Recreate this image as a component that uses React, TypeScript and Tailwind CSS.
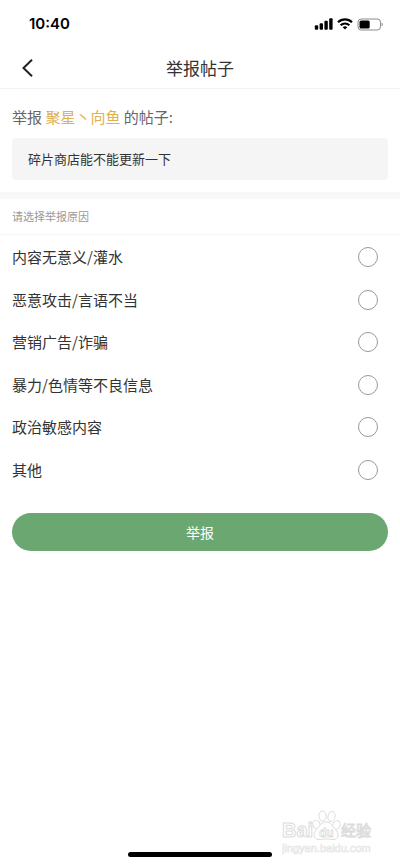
import React, { useState } from 'react';

const REASONS = [
  '内容无意义/灌水',
  '恶意攻击/言语不当',
  '营销广告/诈骗',
  '暴力/色情等不良信息',
  '政治敏感内容',
  '其他',
];

const StatusBar: React.FC = () => (
  <div className="h-12 pl-7 pr-4 flex items-center justify-between text-black">
    <span className="pl-px font-['Inter'] text-[15px] leading-5 font-semibold">10:40</span>
    <div className="flex items-center gap-1">
      {/* Signal */}
      <svg width="19" height="12" viewBox="0 0 19 12" fill="currentColor" aria-hidden="true">
        <rect x="0.8" y="7.3" width="3.4" height="4.5" rx="1" />
        <rect x="5.6" y="5.2" width="3.4" height="6.6" rx="1" />
        <rect x="10.4" y="2.8" width="3.4" height="9" rx="1" />
        <rect x="15.2" y="0.3" width="3.4" height="11.5" rx="1" />
      </svg>
      {/* Wifi */}
      <svg width="16" height="12" viewBox="0 0 16 12" fill="none" stroke="currentColor" aria-hidden="true">
        <path d="M1 4.300a10 10 0 0 1 14 0" strokeWidth="2.2" />
        <path d="M3.600 7.200a6.300 6.300 0 0 1 8.800 0" strokeWidth="2" />
        <path d="M8 11.600 5.700 9.300a3.300 3.300 0 0 1 4.600 0z" fill="currentColor" stroke="none" />
      </svg>
      {/* Battery */}
      <svg width="27" height="13" viewBox="0 0 27 13" aria-hidden="true">
        <rect x="1" y="1" width="22.5" height="11" rx="3.2" fill="none" stroke="#8a8a8a" />
        <rect x="2.5" y="2.5" width="10.2" height="8" rx="1.6" fill="currentColor" />
        <path d="M24.6 4.600c1.600.6 1.600 3.200 0 3.800z" fill="#8a8a8a" />
      </svg>
    </div>
  </div>
);

const Watermark: React.FC = () => (
  <div className="absolute right-7 bottom-2 pointer-events-none">
    <svg
      width="90"
      height="48"
      viewBox="0 0 90 48"
      className="font-['Liberation_Sans','Noto_Sans_CJK_SC',sans-serif]"
      aria-hidden="true"
    >
      <g fill="#fff" stroke="#dcdcdc" strokeWidth="1">
        <text x="0" y="28" fontSize="20" fontWeight="bold">Bai</text>
        <ellipse cx="34.5" cy="15.5" rx="3.6" ry="4.4" transform="rotate(-20 34.5 15.5)" />
        <ellipse cx="40.5" cy="7" rx="3.6" ry="5" />
        <ellipse cx="49.5" cy="7.5" rx="3.6" ry="5" transform="rotate(12 49.5 7.5)" />
        <ellipse cx="54.5" cy="16" rx="3.6" ry="4.4" transform="rotate(22 54.5 16)" />
        <path d="M44 13c5 0 6 4 9.500 7.500 4 4 3.500 10-2.500 10-3 0-4-.6-7-.6s-4 .6-7 .6c-6 0-6.500-6-2.500-10C38 17 39 13 44 13z" />
        <text x="59" y="27" fontSize="15">经验</text>
        <text x="37" y="28" fontSize="12" fontWeight="bold" strokeWidth="0.8">du</text>
      </g>
      <text x="0" y="43" fontSize="11" fill="#fff" stroke="#e6e6e6" strokeWidth="0.7">jingyan.baidu.com</text>
    </svg>
  </div>
);

const App: React.FC = () => {
  const [reason, setReason] = useState('');

  return (
    <div className="relative min-h-screen flex flex-col bg-white text-[#333] font-['Noto_Sans_CJK_SC',sans-serif]">
      <StatusBar />

      {/* Header */}
      <header className="h-[41px] px-5 flex items-center border-b border-[#f2f2f2]">
        <button type="button" aria-label="返回" className="w-6 text-[#222]">
          <svg width="14" height="20" viewBox="0 0 14 20" fill="none" stroke="currentColor" strokeWidth="2" aria-hidden="true">
            <path d="M12 1.700 3.500 10l8.500 8.300" />
          </svg>
        </button>
        <h1 className="flex-1 text-center text-[17px] leading-6">举报帖子</h1>
        <div className="w-6" />
      </header>

      {/* Reported post */}
      <section className="px-3 pt-[18px] pb-3 border-b-[7px] border-[#f8f8f8]">
        <p className="text-[15px] leading-5 text-[#666]">
          举报 <a href="#user" className="text-[#e0b04f]">聚星丶向鱼</a> 的帖子:
        </p>
        <div className="mt-[11px] h-[42px] px-4 flex items-center rounded bg-[#f5f5f5] text-[13px]">
          碎片商店能不能更新一下
        </div>
      </section>

      {/* Reasons */}
      <form onSubmit={e => e.preventDefault()}>
        <fieldset>
          <legend className="w-full h-9 px-3 flex items-center border-b border-[#f7f7f7] text-[11px] text-[#999]">
            请选择举报原因
          </legend>
          <div className="min-h-64 pt-px grid grid-rows-6">
            {REASONS.map(item => (
              <label key={item} className="pl-3 pr-[22px] flex items-center justify-between text-[15px] leading-5">
                {item}
                <input
                  type="radio"
                  name="reason"
                  value={item}
                  checked={reason === item}
                  onChange={() => setReason(item)}
                  className="appearance-none w-5 h-5 rounded-full border border-[#999] checked:border-[6px] checked:border-[#6ba770]"
                />
              </label>
            ))}
          </div>
        </fieldset>
        <div className="px-3 pt-[22px]">
          <button type="submit" className="w-full h-[38px] rounded-full bg-[#6ba770] text-white text-sm">
            举报
          </button>
        </div>
      </form>

      {/* Home indicator */}
      <div className="mt-auto mb-2 mx-auto w-36 h-[5px] rounded-full bg-black" />

      <Watermark />
    </div>
  );
};

export default App;
